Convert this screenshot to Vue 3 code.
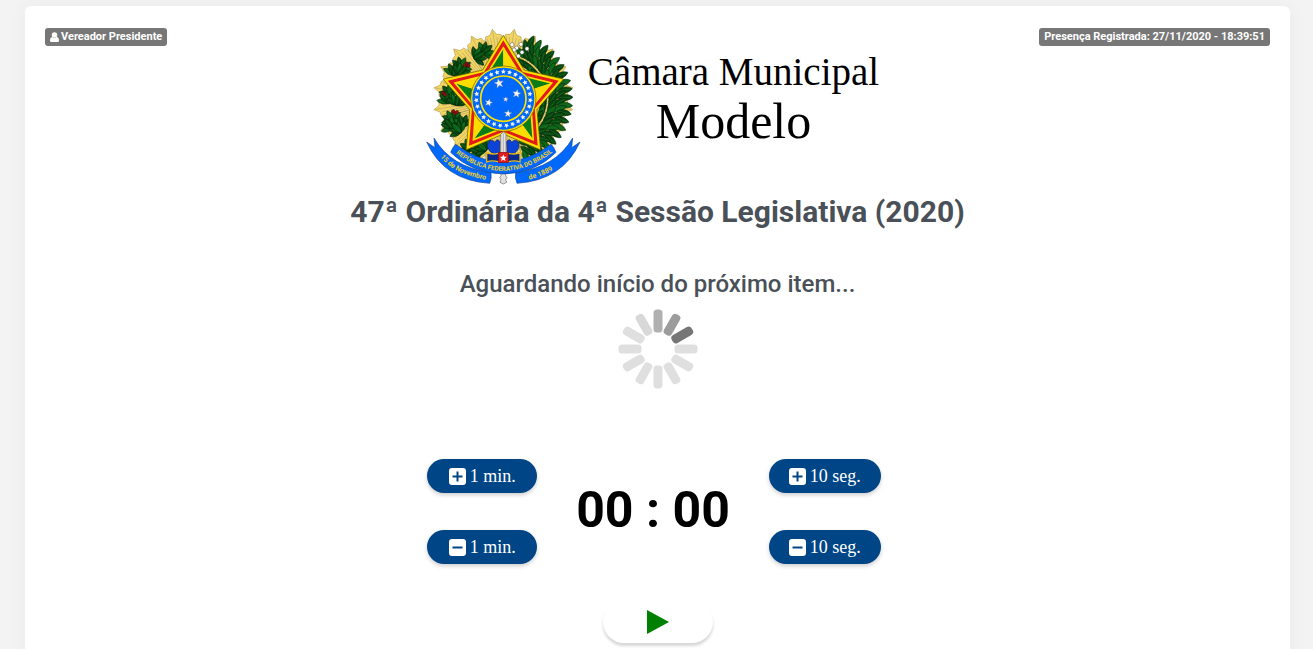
<script setup>
const polar = (r, deg, cx = 250, cy = 224) => {
  const a = (deg * Math.PI) / 180
  return [cx + r * Math.sin(a), cy - r * Math.cos(a)]
}
const join = (pts) => pts.map((p) => p.map((n) => n.toFixed(1)).join(',')).join(' ')

const star = (cx, cy, outer, inner, tilt = 0) => {
  const pts = []
  for (let i = 0; i < 10; i++) pts.push(polar(i % 2 ? inner : outer, i * 36 + tilt, cx, cy))
  return join(pts)
}

const sunRays = []
for (let i = 0; i < 20; i++) {
  const a = i * 18 + 9
  sunRays.push(join([[250, 224], polar(176, a - 9), polar(193, a - 7), polar(194, a - 3), polar(211, a), polar(194, a + 3), polar(193, a + 7), polar(176, a + 9)]))
}
const rayLines = []
for (let i = 0; i < 120; i++) {
  const [x1, y1] = polar(110, i * 3)
  const [x2, y2] = polar(i % 6 === 3 ? 206 : 186, i * 3)
  rayLines.push({ x1, y1, x2, y2 })
}

const facetOuter = 148
const facetInner = 84
const facets = [0, 72, 144, 216, 288].map((a) => ({
  green: join([[250, 224], polar(facetOuter, a), polar(facetInner, a - 36)]),
  gold: join([[250, 224], polar(facetOuter, a), polar(facetInner, a + 36)])
}))

const ringStars = []
for (let i = 0; i < 27; i++) {
  const [x, y] = polar(81, (i * 360) / 27)
  ringStars.push(star(x, y, 8, 3.8, (i * 360) / 27))
}
const crossStars = [
  star(237, 178, 15, 6, -12),
  star(290, 209, 13, 5.5, 10),
  star(206, 236, 12, 5, 14),
  star(257, 226, 8, 3.4, 8),
  star(264, 269, 12, 5, 6)
]

const leaves = []
const addLeaf = (x, y, rot, len, i) =>
  leaves.push({ t: `translate(${x.toFixed(1)} ${y.toFixed(1)}) rotate(${rot.toFixed(0)})`, len, fill: i % 3 ? '#07480f' : '#0b6418' })
const clusters = [
  [190, 86, 50], [166, 101, 60], [122, 132, 25], [101, 150, 10], [118, 150, 40], [90, 212, -5], [84, 234, -10],
  [110, 240, 10], [98, 290, -30], [96, 310, -40], [128, 305, -15], [120, 322, -45], [150, 376, -60], [180, 386, -70], [196, 376, -50]
]
clusters.forEach(([x, y, r], k) => {
  ;[-72, 72, -36, 36, 0].forEach((d, i) => addLeaf(x, y, r + d, 34, i + k))
})
for (let a = 26; a <= 164; a += 7) {
  ;[122, 140, 157, 172].forEach((rad, i) => {
    const [x, y] = polar(rad, a)
    addLeaf(x, y, a - 90 + (i - 1) * 32 + 25, 37, i + a)
  })
}
const leafPath = (l) => `M0 6 C${-l / 2.7} ${-l / 5} ${-l / 4} ${-l * 0.75} 0 ${-l} C${l / 4} ${-l * 0.75} ${l / 2.7} ${-l / 5} 0 6Z`
const berries = [[139, 119], [146, 125], [134, 124], [104, 268], [111, 264], [99, 262], [70, 207], [75, 212]]
const flowers = [[276, 62], [290, 72], [303, 61], [306, 85], [321, 74], [295, 96], [282, 78]]

const spokes = ['#b0b0b0', '#9c9c9c', '#767676', '#dfdfdf', '#dfdfdf', '#dfdfdf', '#dfdfdf', '#dfdfdf', '#dfdfdf', '#dfdfdf', '#dfdfdf', '#d8d8d8']

const groups = [
  { name: 'minutes', label: '1 min.' },
  { name: 'seconds', label: '10 seg.' }
]
</script>

<template>
  <div class="page">
    <main class="card">
      <header class="status">
        <span class="badge">
          <svg class="user" viewBox="0 0 18 20" aria-hidden="true"><circle cx="9" cy="6" r="5.5" /><path d="M0 18C0 12 2 10 5 10Q9 14 13 10C16 10 18 12 18 18Q18 20 15 20H3Q0 20 0 18Z" /></svg>
          Vereador Presidente
        </span>
        <span class="badge">Presença Registrada: 27/11/2020 - 18:39:51</span>
      </header>

      <section class="brand">
        <svg class="crest" viewBox="0 0 495 495" role="img" aria-label="Brasão da República">
          <g fill="#f3d560" stroke="#a08a3c" stroke-width="1.5"><polygon v-for="(p, i) in sunRays" :key="i" :points="p" /></g>
          <g stroke="#a1977a" stroke-width="1.5"><line v-for="(l, i) in rayLines" :key="i" v-bind="l" /></g>
          <g stroke="#03210a" stroke-width="1.5">
            <g v-for="(l, i) in leaves" :key="i" :transform="l.t">
              <path :d="leafPath(l.len)" :fill="l.fill" /><path :d="`M0 4V${-l.len + 5}`" stroke="#23752b" />
            </g>
          </g>
          <circle v-for="(b, i) in berries" :key="'b' + i" :cx="b[0]" :cy="b[1]" r="5" fill="#8c1212" stroke="#3a0808" />
          <circle v-for="(f, i) in flowers" :key="'f' + i" :cx="f[0]" :cy="f[1]" r="6" fill="#fff" stroke="#555" stroke-width="1.5" />

          <g stroke="#12205e" stroke-width="2" fill="#0b43d8">
            <path d="M238 392C232 384 224 392 215 386C203 378 199 362 206 353C212 346 222 348 224 356C229 344 237 346 240 354Z" />
            <path d="M262 392C268 384 276 392 285 386C297 378 301 362 294 353C288 346 278 348 276 356C271 344 263 346 260 354Z" />
          </g>
          <polygon :points="star(250, 224, 190, 106)" fill="#ffe000" stroke="#5d5300" stroke-width="2" />
          <polygon :points="star(250, 224, 175, 99)" fill="#e31b18" />
          <polygon :points="star(250, 224, 157, 90)" fill="#ffe000" />
          <g v-for="(f, i) in facets" :key="'s' + i"><polygon :points="f.green" fill="#087d18" /><polygon :points="f.gold" fill="#ffdc00" /></g>

          <circle cx="250" cy="224" r="98" fill="#ffe000" stroke="#665900" stroke-width="2" />
          <circle cx="250" cy="224" r="93" fill="#0068fa" />
          <circle cx="250" cy="224" r="68" fill="#0068fa" stroke="#ffe000" stroke-width="5" />
          <g fill="#f4f4f4"><polygon v-for="(p, i) in ringStars" :key="i" :points="p" /></g>
          <g fill="#f8f4ef" stroke="#8590ad"><polygon v-for="(p, i) in crossStars" :key="i" :points="p" /></g>

          <path d="M242 331L250 323L258 331V390H242Z" fill="#e4e4e4" stroke="#666" stroke-width="2" />
          <path d="M250 328V388" stroke="#999" stroke-width="2" />
          <path d="M243 430H257V455L261 461L257 467L260 475L250 480L240 475L243 467L239 461L243 455Z" fill="#e0e0e0" stroke="#666" stroke-width="2" />
          <g fill="#0068fa" stroke="#174a92" stroke-width="2">
            <path d="M20 354L45 371L42 342Q93 430 213 446Q216 463 209 478Q72 469 20 354Z" />
            <path d="M480 354L455 371L458 342Q407 430 287 446Q284 463 291 478Q428 469 480 354Z" />
            <path d="M107 361Q175 413 250 414Q325 413 393 361Q403 371 408 385Q346 448 250 450Q154 448 92 385Q97 371 107 361Z" />
          </g>
          <path d="M200 386Q214 393 235 388H265Q286 393 300 386V414Q286 408 265 413H235Q214 408 200 414Z" fill="#092a8e" stroke="#e2b91d" stroke-width="4" />
          <rect x="235" y="385" width="30" height="31" fill="#e6191b" stroke="#7b1515" stroke-width="2" />
          <polygon :points="star(250, 402, 11, 5)" fill="#fff" />

          <path id="motto" d="M103 384Q171 439 250 441Q329 439 403 381" fill="none" />
          <path id="date" d="M61 399Q104 453 207 469" fill="none" />
          <path id="year" d="M328 467Q375 454 410 432" fill="none" />
          <g class="ribbon-text">
            <text class="motto"><textPath href="#motto" startOffset="50%">REPÚBLICA FEDERATIVA DO BRASIL</textPath></text>
            <text><textPath href="#date">15 de Novembro</textPath></text>
            <text><textPath href="#year">de 1889</textPath></text>
          </g>
        </svg>
        <div class="brand-name"><span>Câmara Municipal</span><strong>Modelo</strong></div>
      </section>

      <h1>47ª Ordinária da 4ª Sessão Legislativa (2020)</h1>
      <h2>Aguardando início do próximo item...</h2>
      <svg class="spinner" viewBox="0 0 80 80" role="img" aria-label="Carregando">
        <rect v-for="(c, i) in spokes" :key="i" x="35.5" y="0.5" width="9" height="23" rx="3.5" :fill="c" :transform="`rotate(${i * 30} 40 40)`" />
      </svg>

      <section class="timer">
        <div v-for="g in groups" :key="g.name" class="adjust" :class="g.name">
          <button v-for="op in ['+', '-']" :key="op" type="button" class="pill" :aria-label="`${op} ${g.label}`">
            <svg class="sign" viewBox="0 0 17 17" aria-hidden="true">
              <rect width="17" height="17" rx="3" fill="#fff" />
              <path :d="op === '+' ? 'M3.5 8.5H13.5M8.5 3.5V13.5' : 'M3.5 8.5H13.5'" stroke="#004586" stroke-width="2" />
            </svg>
            {{ g.label }}
          </button>
        </div>
        <div class="clock">00 : 00</div>
      </section>

      <button type="button" class="play" aria-label="Iniciar">
        <svg viewBox="0 0 22 24" aria-hidden="true"><path d="M0 0L22 12L0 24Z" fill="#008000" /></svg>
      </button>
    </main>
  </div>
</template>

<style>
body { background: #f3f3f3; }
</style>

<style scoped>
.page {
  box-sizing: border-box;
  height: 100vh;
  overflow: hidden;
  padding: 6px 23px 0 25px;
  font-family: Roboto, "Liberation Sans", sans-serif;
  color: #495057;
}
.card {
  box-sizing: border-box;
  min-height: 100vh;
  padding: 22px 20px;
  border-radius: 6px;
  background: #fff;
  box-shadow: 0 0 20px rgba(0, 0, 0, 0.04);
  display: flex;
  flex-direction: column;
  align-items: center;
}
.status {
  align-self: stretch;
  display: flex;
  justify-content: space-between;
  height: 18px;
}
.badge {
  display: flex;
  align-items: center;
  gap: 2px;
  padding: 0 5px;
  border-radius: 3px;
  background: #777;
  color: #fff;
  font-size: 11px;
  font-weight: 700;
  line-height: 18px;
}
.user { width: 9px; height: 10px; fill: #fff; }
.brand {
  display: flex;
  margin-top: -22px;
  gap: 3px;
  padding-right: 16px;
}
.crest { width: 165px; height: 165px; }
.ribbon-text {
  fill: #f1cf24;
  font: 700 21px Roboto, "Liberation Sans", sans-serif;
}
.motto { font-size: 19px; text-anchor: middle; }
.brand-name {
  display: flex;
  flex-direction: column;
  align-items: center;
  padding-top: 24px;
  color: #000;
  font-family: "Liberation Serif", serif;
}
.brand-name span { font-size: 39px; line-height: 48px; }
.brand-name strong { font-size: 50px; font-weight: 400; line-height: 50px; }
h1 { margin: 5px 0 0; font-size: 30px; font-weight: 700; line-height: 36px; }
h2 { margin: 39px 0 0; font-size: 24px; font-weight: 500; line-height: 30px; }
.spinner { width: 80px; height: 80px; margin-top: 10px; }
.timer {
  display: flex;
  align-items: center;
  gap: 39px;
  margin-top: 70px;
  padding-right: 7px;
}
.adjust { display: flex; flex-direction: column; gap: 37px; }
.clock { order: 1; padding-bottom: 4px; color: #000; font-size: 50px; font-weight: 700; line-height: 60px; }
.seconds { order: 2; }
.pill {
  display: flex;
  align-items: center;
  justify-content: center;
  gap: 4px;
  min-width: 110px;
  height: 34px;
  padding: 0 20px;
  border: 0;
  border-radius: 17px;
  background: #004586;
  color: #fff;
  box-shadow: 0 2px 4px rgba(0, 0, 0, 0.2);
  font: 18px "Liberation Serif", serif;
}
.sign { width: 17px; height: 17px; }
.play {
  display: flex;
  align-items: center;
  justify-content: center;
  width: 110px;
  height: 42px;
  margin-top: 37px;
  border: 0;
  border-radius: 21px;
  background: #fff;
  box-shadow: 0 3px 3px rgba(0, 0, 0, 0.16);
}
.play svg { width: 22px; height: 24px; }
</style>
